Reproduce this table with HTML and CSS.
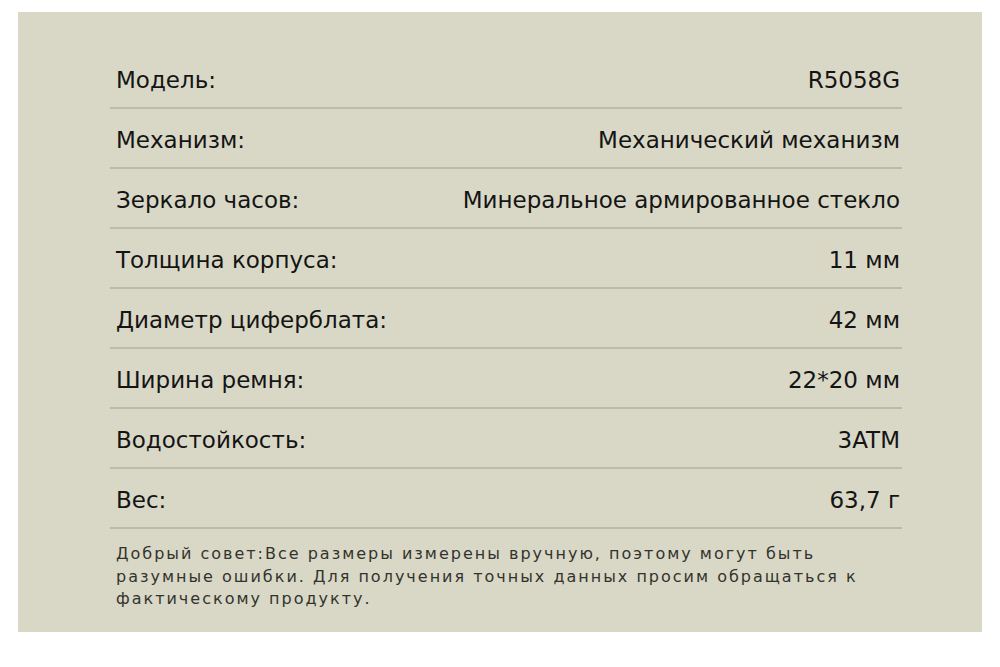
FILE: index.html
```html
<!DOCTYPE html>
<html lang="ru">
<head>
<meta charset="utf-8">
<link rel="stylesheet" href="styles.css">
</head>
<body>
<div class="panel">
  <div class="specs">
    <div class="row"><span class="label">Модель:</span><span class="value">R5058G</span></div>
    <div class="row"><span class="label">Механизм:</span><span class="value">Механический механизм</span></div>
    <div class="row"><span class="label">Зеркало часов:</span><span class="value">Минеральное армированное стекло</span></div>
    <div class="row"><span class="label">Толщина корпуса:</span><span class="value">11 мм</span></div>
    <div class="row"><span class="label">Диаметр циферблата:</span><span class="value">42 мм</span></div>
    <div class="row"><span class="label">Ширина ремня:</span><span class="value">22*20 мм</span></div>
    <div class="row"><span class="label">Водостойкость:</span><span class="value">3ATM</span></div>
    <div class="row"><span class="label">Вес:</span><span class="value">63,7 г</span></div>
  </div>
  <p class="note">Добрый совет:Все размеры измерены вручную, поэтому могут быть разумные ошибки. Для получения точных данных просим обращаться к фактическому продукту.</p>
</div>
</body>
</html>
```
FILE: styles.css
```css
html, body {
  margin: 0;
  padding: 0;
  background: #ffffff;
}
body {
  padding: 12px 18px 0 18px;
  font-family: "DejaVu Sans", sans-serif;
}
.panel {
  width: 964px;
  height: 620px;
  background: #d9d8c6;
  box-sizing: border-box;
  padding: 37px 80px 0 92px;
}
.specs {
  display: flex;
  flex-direction: column;
}
.row {
  height: 55px;
  border-bottom: 2px solid #bdbcab;
  display: flex;
  justify-content: space-between;
  align-items: center;
  padding: 3px 2px 0 6px;
  font-size: 23px;
  color: #141414;
}
.note {
  margin: 14px 0 0 6px;
  font-size: 16px;
  line-height: 22.5px;
  letter-spacing: 2px;
  color: #33332e;
  width: 760px;
}
```
